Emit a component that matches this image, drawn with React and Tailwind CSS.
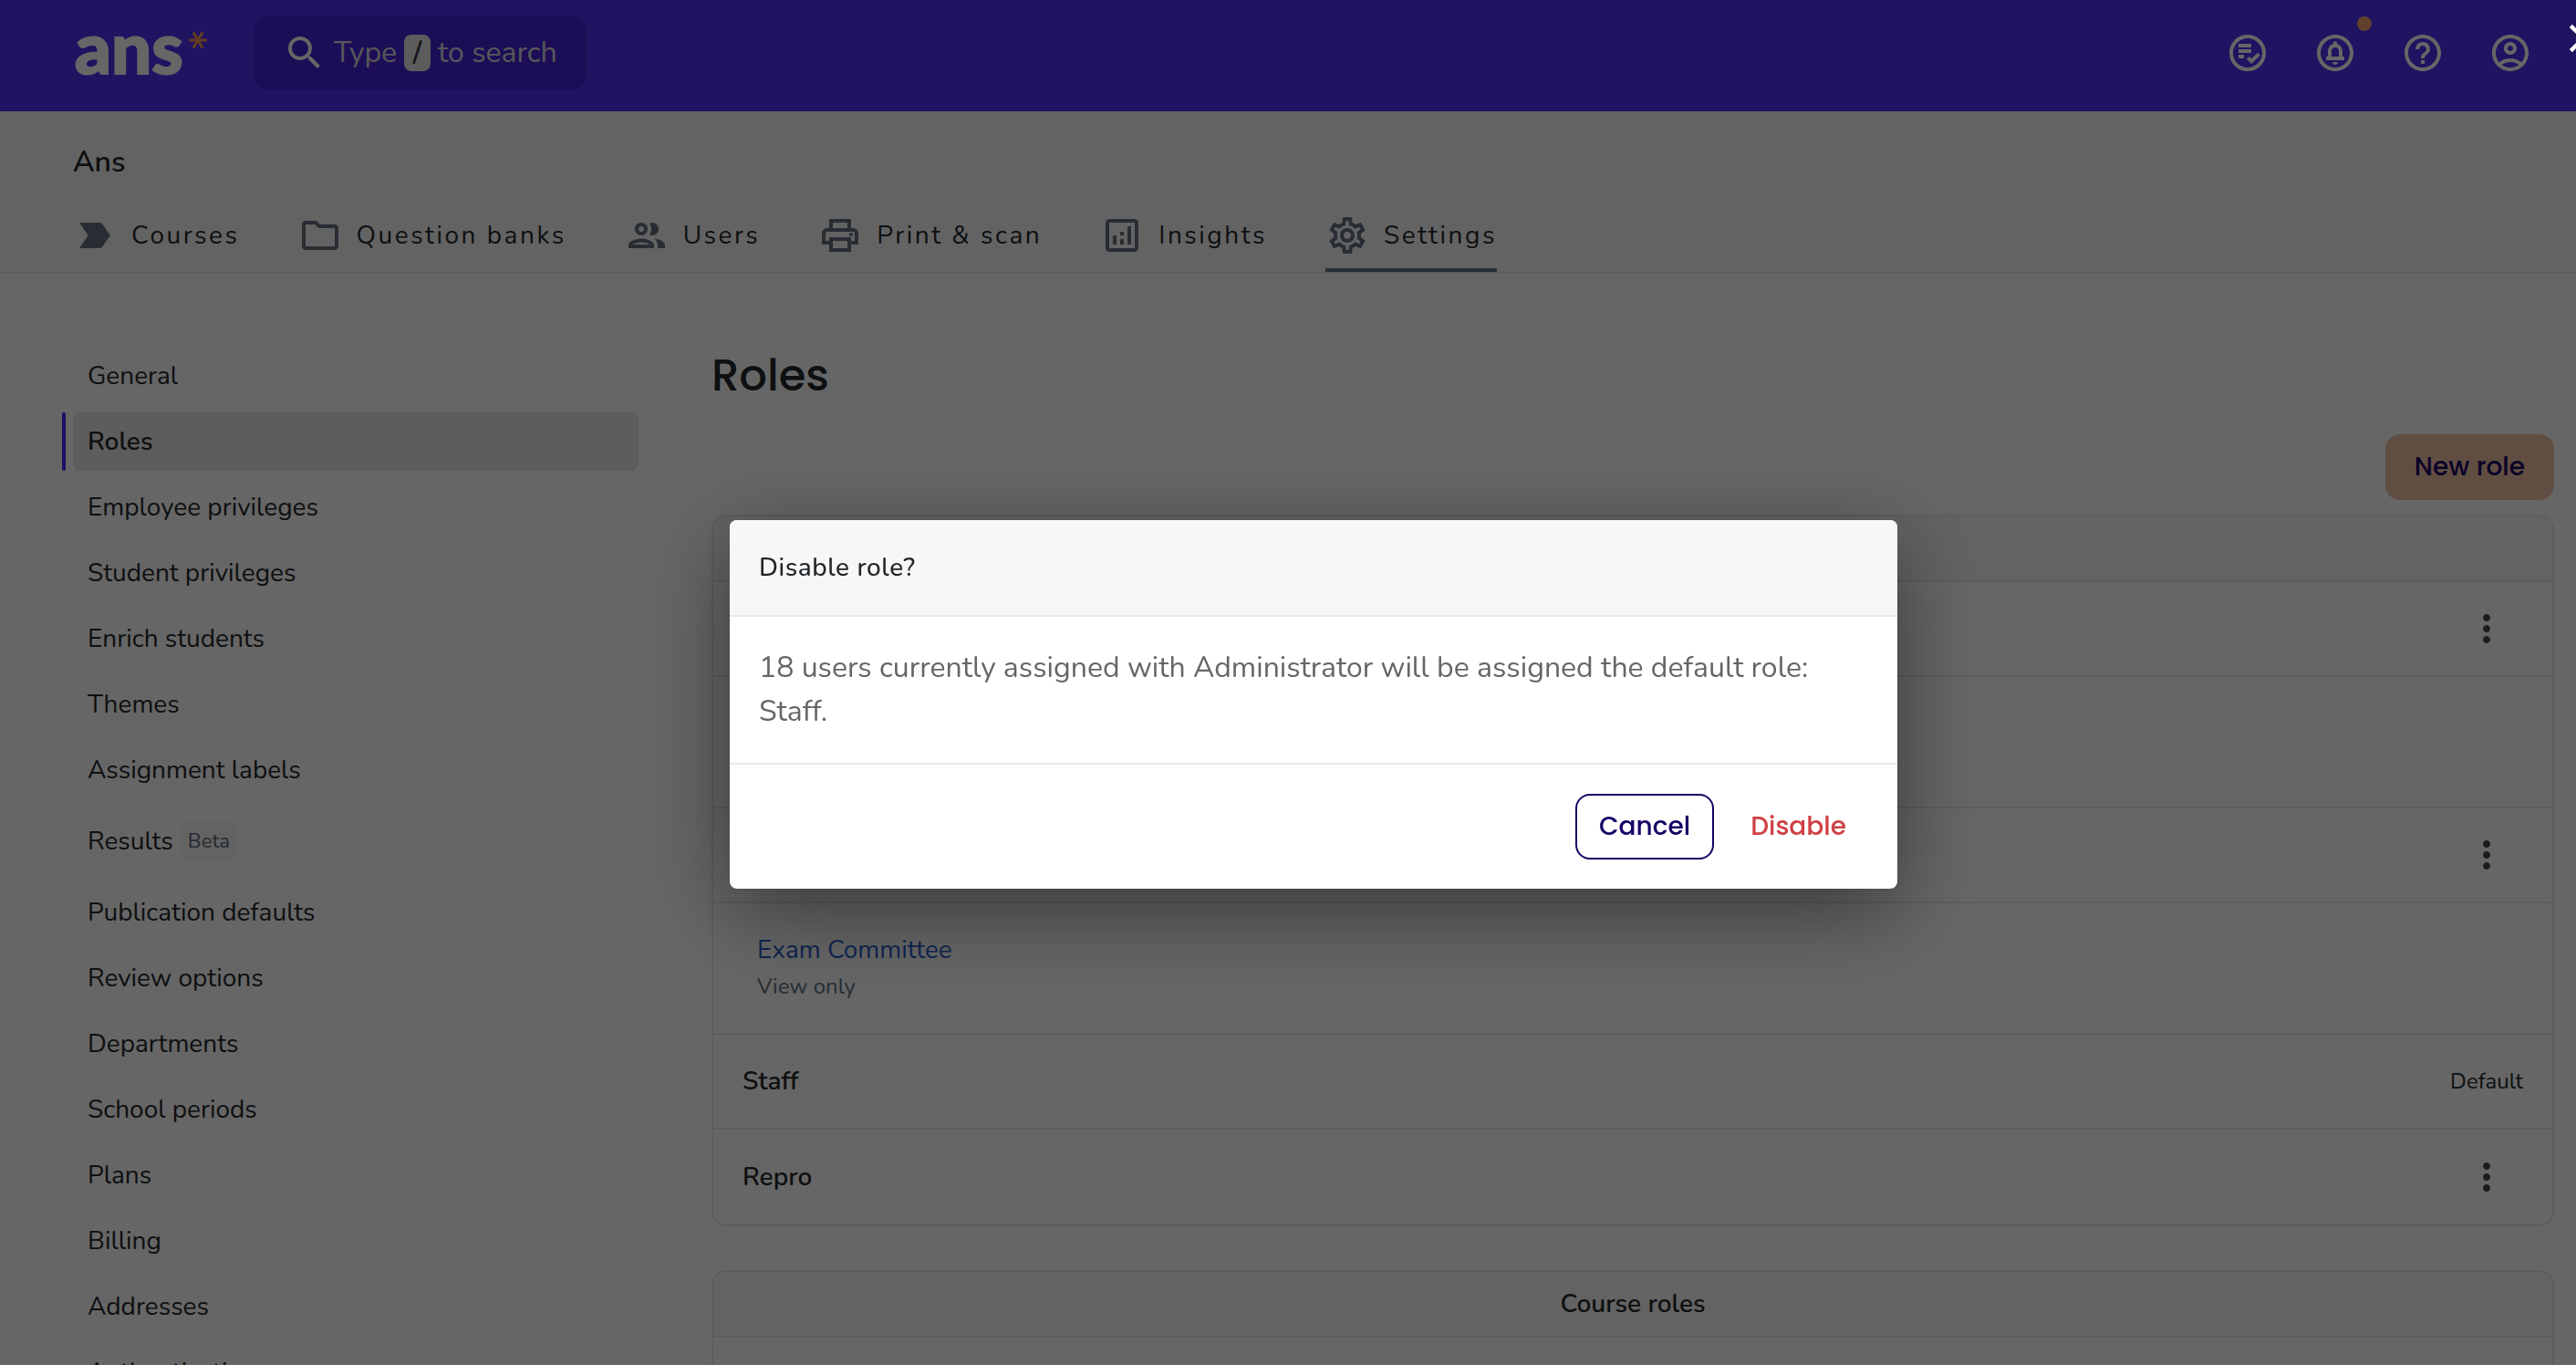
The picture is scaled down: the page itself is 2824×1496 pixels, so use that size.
import {
  MdClose,
  MdHelpOutline,
  MdLabelImportant,
  MdMoreVert,
  MdOutlineAccountCircle,
  MdOutlineAnalytics,
  MdOutlineCircleNotifications,
  MdOutlineFolder,
  MdOutlinePrint,
  MdOutlineSettings,
  MdSearch,
} from 'react-icons/md';

function GroupIcon({ className }) {
  return (
    <svg viewBox="0 0 24 24" fill="currentColor" className={className} aria-hidden="true">
      <path d="M9 13.75c-2.34 0-7 1.17-7 3.5V19h14v-1.75c0-2.33-4.66-3.5-7-3.5zM4.34 17c.84-.58 2.87-1.25 4.66-1.25s3.82.67 4.66 1.25H4.34zM9 12c1.93 0 3.5-1.57 3.5-3.5S10.93 5 9 5 5.5 6.57 5.5 8.5 7.07 12 9 12zm0-5c.83 0 1.5.67 1.5 1.5S9.83 10 9 10s-1.5-.67-1.5-1.5S8.17 7 9 7zm7.04 6.81c1.16.84 1.96 1.96 1.96 3.44V19h4v-1.75c0-2.02-3.5-3.17-5.96-3.44zM15 12c1.93 0 3.5-1.57 3.5-3.5S16.93 5 15 5c-.54 0-1.04.13-1.5.35.63.89 1 1.98 1 3.15s-.37 2.26-1 3.15c.46.22.96.35 1.5.35z" />
    </svg>
  );
}

function TasksIcon({ className }) {
  return (
    <svg viewBox="0 0 24 24" fill="none" stroke="currentColor" strokeWidth="2" className={className} aria-hidden="true">
      <circle cx="12" cy="12" r="9" />
      <path d="M7 8h7M7 11h7M7 14h3M12.2 14.7l1.9 1.9 4.1-4" />
    </svg>
  );
}

const tabs = [
  { label: 'Courses', icon: MdLabelImportant },
  { label: 'Question banks', icon: MdOutlineFolder },
  { label: 'Users', icon: GroupIcon },
  { label: 'Print & scan', icon: MdOutlinePrint },
  { label: 'Insights', icon: MdOutlineAnalytics },
  { label: 'Settings', icon: MdOutlineSettings, active: true },
];

const menu = [
  { label: 'General' },
  { label: 'Roles', active: true },
  { label: 'Employee privileges' },
  { label: 'Student privileges' },
  { label: 'Enrich students' },
  { label: 'Themes' },
  { label: 'Assignment labels' },
  { label: 'Results', badge: 'Beta' },
  { label: 'Publication defaults' },
  { label: 'Review options' },
  { label: 'Departments' },
  { label: 'School periods' },
  { label: 'Plans' },
  { label: 'Billing' },
  { label: 'Addresses' },
  { label: 'Authentication' },
];

function Logo() {
  return (
    <a href="#" className="flex h-20 w-[150px] items-start pl-0.5 text-white">
      <span className="font-['Lato',sans-serif] text-[78px] leading-[66px] font-black [-webkit-text-stroke:2px_white]">ans</span>
      <svg viewBox="0 0 20 20" className="mt-4 ml-1.5 h-5 w-5 shrink-0 stroke-[#f29a55]" strokeWidth="3" aria-hidden="true">
        <path d="M0 10h20M5 1.5l10 17M15 1.5l-10 17" />
      </svg>
    </a>
  );
}

function TopBar() {
  return (
    <header className="flex h-[122px] items-start justify-between bg-[#5230f3] pr-12 pl-20">
      <div className="flex items-center gap-12 pt-[18px]">
        <Logo />
        <button className="flex h-20 items-center gap-2 rounded-2xl bg-[#4623d7] px-8 text-[32px] text-[#dadcde]">
          <MdSearch className="size-12 text-white" />
          <span className="flex items-center gap-2">
            Type
            <kbd className="flex h-10 w-[29px] items-center justify-center rounded-lg bg-[#e5e5e5] font-['Nunito','Lato',sans-serif] font-semibold text-[#343a40]">/</kbd>
            to search
          </span>
        </button>
      </div>
      <div className="flex gap-12 pt-[34px] text-white">
        <button aria-label="Tasks"><TasksIcon className="size-12" /></button>
        <button aria-label="Notifications" className="relative">
          <MdOutlineCircleNotifications className="size-12" />
          <span className="absolute -top-4 -right-4 size-4 rounded-full bg-[#f2a078]" />
        </button>
        <button aria-label="Help"><MdHelpOutline className="size-12" /></button>
        <button aria-label="Account"><MdOutlineAccountCircle className="size-12" /></button>
      </div>
    </header>
  );
}

function SchoolNav() {
  return (
    <div className="border-b-2 border-[#e8e8e8] bg-[#f8f8f8] px-20 pt-8">
      <div className="text-[32px] leading-[48px] font-semibold">Ans</div>
      <nav className="mt-5 flex gap-16">
        {tabs.map(({ label, icon: Icon, active }) => (
          <a
            key={label}
            href="#"
            className={`flex h-[76px] items-center gap-4 border-b-4 text-[28px] tracking-[0.09em] whitespace-nowrap ${
              active ? 'border-[#64717f]' : 'border-transparent'
            }`}
          >
            <Icon className="size-12 text-[#64717f]" />
            {label}
          </a>
        ))}
      </nav>
    </div>
  );
}

function Sidebar() {
  return (
    <nav className="flex flex-col gap-2">
      {menu.map(({ label, badge, active }) => (
        <a
          key={label}
          href="#"
          className={`relative flex items-center gap-2 rounded-lg px-4 text-[28px] ${badge ? 'h-[76px]' : 'h-16'} ${
            active ? 'bg-[#e9e9e9] font-semibold' : ''
          }`}
        >
          {active && <span className="absolute inset-y-0 -left-3 w-1 rounded-full bg-[#4b25ff]" />}
          {label}
          {badge && (
            <span className="flex h-11 items-center rounded-lg bg-[#f8f8f8] px-2 text-[22px] font-medium text-[#64717f]">{badge}</span>
          )}
        </a>
      ))}
    </nav>
  );
}

function Card({ title, children }) {
  return (
    <section className="overflow-hidden rounded-2xl border-2 border-[#e8e8e8]">
      <h2 className="flex h-[70px] items-center justify-center bg-[#f8f8f8] text-[28px] font-semibold">{title}</h2>
      {children}
    </section>
  );
}

function RoleRow({ name, isDefault }) {
  return (
    <div className="flex h-[104px] items-center justify-between border-t-2 border-[#e8e8e8] px-8 text-[28px] last:h-[106px]">
      <span className="font-semibold">{name}</span>
      {isDefault ? (
        <span className="text-2xl">Default</span>
      ) : (
        <button aria-label="Role actions" className="mr-4">
          <MdMoreVert className="size-12 text-[#3f4a52]" />
        </button>
      )}
    </div>
  );
}

function SubRoleRow({ name, note }) {
  return (
    <div className="flex h-36 flex-col justify-center border-t-2 border-[#e8e8e8] px-12">
      <a href="#" className="self-start text-[28px] leading-10 text-[#2b5dc8]">{name}</a>
      <span className="text-2xl leading-10 text-[#64717f]">{note}</span>
    </div>
  );
}

function DisableDialog() {
  return (
    <div className="fixed inset-0 flex items-center justify-center overflow-hidden bg-black/60 pt-12 pl-14">
      <div
        role="dialog"
        aria-labelledby="dialog-title"
        className="w-full max-w-7xl overflow-hidden rounded-lg bg-white shadow-[0_24px_96px_rgba(0,0,0,0.45)]"
      >
        <h2 id="dialog-title" className="border-b-2 border-[#e8e8e8] bg-[#f7f7f7] px-8 py-8 text-[28px] leading-10 font-medium tracking-[0.02em] text-[#212529]">
          Disable role?
        </h2>
        <p className="p-8 text-[32px] leading-[48px] text-[#666666]">
          18 users currently assigned with Administrator will be assigned the default role: Staff.
        </p>
        <div className="flex justify-end gap-4 border-t-2 border-[#e8e8e8] p-8 font-['Poppins','Inter',sans-serif] text-[28px] font-medium">
          <button className="h-[72px] rounded-2xl border-2 border-[#190066] px-6 text-[#190066]">Cancel</button>
          <button className="h-[72px] rounded-2xl px-6 text-[#cf4044]">Disable</button>
        </div>
      </div>
      <button aria-label="Close" className="absolute top-4 -right-[34px] text-white">
        <MdClose className="size-[52px]" />
      </button>
    </div>
  );
}

export default function App() {
  return (
    <div className="h-screen overflow-hidden bg-white font-['Nunito','Lato',sans-serif] text-[#25282b]">
      <TopBar />
      <SchoolNav />
      <div className="grid grid-cols-[620px_1fr] gap-20 pt-20 pr-6 pl-20">
        <Sidebar />
        <main>
          <h1 className="font-['Poppins','Inter',sans-serif] text-5xl leading-[64px] font-medium">Roles</h1>
          <div className="mt-8 mb-4 flex justify-end">
            <button className="h-[72px] rounded-2xl bg-[#f2c3a5] px-8 font-['Poppins','Inter',sans-serif] text-[28px] font-medium text-[#190066]">
              New role
            </button>
          </div>
          <div className="flex flex-col gap-12">
            <Card>
              <RoleRow name="Administrator" />
              <SubRoleRow />
              <RoleRow />
              <SubRoleRow name="Exam Committee" note="View only" />
              <RoleRow name="Staff" isDefault />
              <RoleRow name="Repro" />
            </Card>
            <Card title="Course roles">
              <RoleRow />
            </Card>
          </div>
        </main>
      </div>
      <DisableDialog />
    </div>
  );
}
